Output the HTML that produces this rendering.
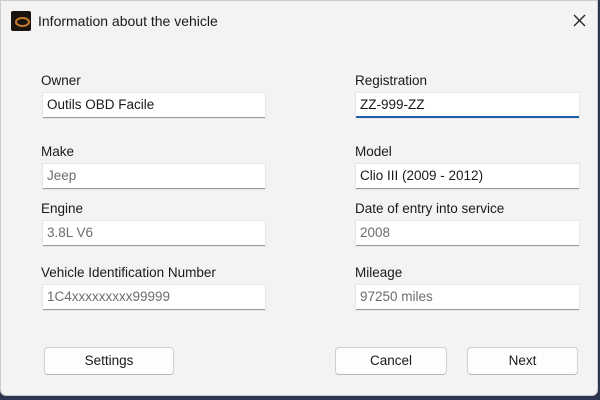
<!DOCTYPE html><html><head><style>
body{margin:0;width:600px;height:400px;background:#2b3550;overflow:hidden;font-family:"Liberation Sans",sans-serif;}
.win{position:absolute;left:0;top:0;width:598px;height:396px;background:#f3f3f3;border:1px solid #ccc;border-radius:0 0 6px 6px;box-sizing:border-box;}
.t{position:absolute;font-size:13.5px;color:#1a1a1a;white-space:nowrap}
.in{position:absolute;background:#fff;border-bottom:1px solid #9a9a9a;box-sizing:border-box;font-size:13.5px;padding:4px 0 0 4px;height:25px;color:#6d6d6d;box-shadow:0 0 0 1px #e6e6e6}
.dark{color:#1a1a1a}
.btn{position:absolute;background:#fdfdfd;border:1px solid #d0d0d0;border-bottom-color:#b8b8b8;border-radius:4px;box-sizing:border-box;font-size:13.5px;text-align:center;line-height:26px;color:#1a1a1a;height:28px}
</style></head><body><div class="win">
<div style="position:absolute;left:10px;top:10px;width:20px;height:20px;background:#1a1410;border-radius:2px"><div style="position:absolute;left:4px;top:6px;width:11px;height:6px;border:2px solid #c67a2a;border-radius:50%"></div></div>
<div class="t" style="left:37px;top:12px;font-size:14px">Information about the vehicle</div>
<svg style="position:absolute;left:572px;top:13px" width="13" height="13"><path d="M1 1L12 12M12 1L1 12" stroke="#222" stroke-width="1.3"/></svg>
<div class="t" style="left:40px;top:72px">Owner</div>
<div class="in dark" style="left:42px;top:92px;width:222px">Outils OBD Facile</div>
<div class="t" style="left:354px;top:72px">Registration</div>
<div class="in dark" style="left:355px;top:92px;width:223px;border-bottom:2px solid #1f5fa8">ZZ-999-ZZ</div>
<div class="t" style="left:40px;top:143px">Make</div>
<div class="in" style="left:42px;top:163px;width:222px">Jeep</div>
<div class="t" style="left:354px;top:143px">Model</div>
<div class="in dark" style="left:355px;top:163px;width:223px">Clio III (2009 - 2012)</div>
<div class="t" style="left:40px;top:200px">Engine</div>
<div class="in" style="left:42px;top:220px;width:222px">3.8L V6</div>
<div class="t" style="left:354px;top:200px">Date of entry into service</div>
<div class="in" style="left:355px;top:220px;width:223px">2008</div>
<div class="t" style="left:40px;top:264px">Vehicle Identification Number</div>
<div class="in" style="left:42px;top:284px;width:222px">1C4xxxxxxxxx99999</div>
<div class="t" style="left:354px;top:264px">Mileage</div>
<div class="in" style="left:355px;top:284px;width:223px">97250 miles</div>
<div class="btn" style="left:43px;top:346px;width:130px">Settings</div>
<div class="btn" style="left:334px;top:346px;width:112px">Cancel</div>
<div class="btn" style="left:466px;top:346px;width:111px">Next</div>
</div></body></html>
